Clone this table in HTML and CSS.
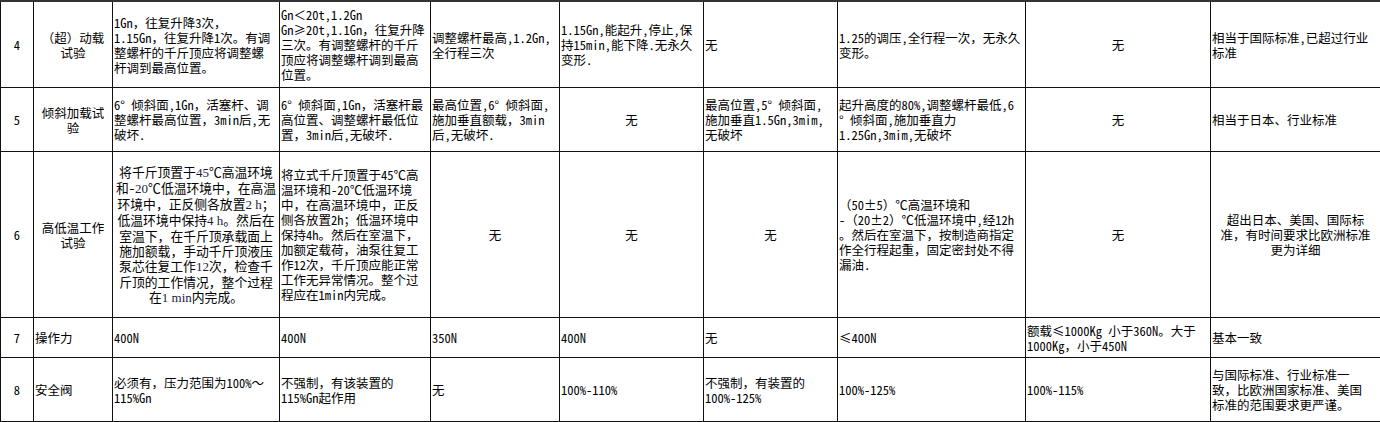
FILE: index.html
```html
<!DOCTYPE html>
<html lang="zh-CN">
<head>
<meta charset="utf-8">
<title>千斤顶标准对比</title>
<link rel="stylesheet" href="styles.css">
</head>
<body>
<table class="grid">
<colgroup>
<col class="w1"><col class="w2"><col class="w3"><col class="w4"><col class="w5">
<col class="w6"><col class="w7"><col class="w8"><col class="w9"><col class="w10">
</colgroup>
<tbody>
<tr class="r4">
<td class="c">4</td>
<td class="c">（超）动载<br>试验</td>
<td>1Gn，往复升降3次，<br>1.15Gn，往复升降1次。有调<br>整螺杆的千斤顶应将调整螺<br>杆调到最高位置。</td>
<td>Gn＜20t,1.2Gn<br>Gn≥20t,1.1Gn，往复升降<br>三次。有调整螺杆的千斤<br>顶应将调整螺杆调到最高<br>位置。</td>
<td>调整螺杆最高,1.2Gn,<br>全行程三次</td>
<td>1.15Gn,能起升,停止,保<br>持15min,能下降.无永久<br>变形.</td>
<td>无</td>
<td>1.25的调压,全行程一次，无永久<br>变形。</td>
<td class="c">无</td>
<td>相当于国际标准,已超过行业<br>标准</td>
</tr>
<tr class="r5">
<td class="c">5</td>
<td class="c">倾斜加载试<br>验</td>
<td>6° 倾斜面,1Gn，活塞杆、调<br>整螺杆最高位置，3min后,无<br>破坏.</td>
<td>6° 倾斜面,1Gn，活塞杆最<br>高位置、调整螺杆最低位<br>置，3min后,无破坏.</td>
<td>最高位置,6° 倾斜面,<br>施加垂直额载，3min<br>后,无破坏.</td>
<td class="c">无</td>
<td>最高位置,5° 倾斜面,<br>施加垂直1.5Gn,3mim,<br>无破坏</td>
<td>起升高度的80%,调整螺杆最低,6<br>° 倾斜面,施加垂直力<br>1.25Gn,3mim,无破坏</td>
<td class="c">无</td>
<td>相当于日本、行业标准</td>
</tr>
<tr class="r6">
<td class="c">6</td>
<td class="c">高低温工作<br>试验</td>
<td class="c big">将千斤顶置于<span class="s">45</span>℃高温环境<br>和-<span class="s">20</span>℃低温环境中，在高温<br>环境中，正反侧各放置<span class="s">2 h</span>；<br>低温环境中保持<span class="s">4 h</span>。然后在<br>室温下，在千斤顶承载面上<br>施加额载，手动千斤顶液压<br>泵芯往复工作<span class="s">12</span>次，检查千<br>斤顶的工作情况，整个过程<br>在<span class="s">1 min</span>内完成。</td>
<td>将立式千斤顶置于45℃高<br>温环境和-20℃低温环境<br>中，在高温环境中，正反<br>侧各放置2h；低温环境中<br>保持4h。然后在室温下，<br>加额定载荷，油泵往复工<br>作12次，千斤顶应能正常<br>工作无异常情况。整个过<br>程应在1min内完成。</td>
<td class="c">无</td>
<td class="c">无</td>
<td class="c">无</td>
<td>（50±5）℃高温环境和<br>-（20±2）℃低温环境中,经12h<br>。然后在室温下，按制造商指定<br>作全行程起重，固定密封处不得<br>漏油.</td>
<td class="c">无</td>
<td class="c">超出日本、美国、国际标<br>准，有时间要求比欧洲标准<br>更为详细</td>
</tr>
<tr class="r7">
<td class="c">7</td>
<td>操作力</td>
<td>400N</td>
<td>400N</td>
<td>350N</td>
<td>400N</td>
<td>无</td>
<td>≤400N</td>
<td>额载≤1000Kg 小于360N。大于<br>1000Kg，小于450N</td>
<td>基本一致</td>
</tr>
<tr class="r8">
<td class="c">8</td>
<td>安全阀</td>
<td>必须有，压力范围为100%～<br>115%Gn</td>
<td>不强制，有该装置的<br>115%Gn起作用</td>
<td>无</td>
<td>100%-110%</td>
<td>不强制，有装置的<br>100%-125%</td>
<td>100%-125%</td>
<td>100%-115%</td>
<td>与国际标准、行业标准一<br>致，比欧洲国家标准、美国<br>标准的范围要求更严谨。</td>
</tr>
</tbody>
</table>
</body>
</html>
```
FILE: styles.css
```css
html, body {
  margin: 0;
  padding: 0;
  background: #fff;
}
body {
  font-family: "Noto Sans Mono CJK SC", "Noto Sans CJK SC", sans-serif;
  font-size: 12.5px;
  line-height: 15px;
  color: #000;
}
.grid {
  border-collapse: collapse;
  table-layout: fixed;
  width: 1380px;
}
.w1 { width: 33px; }
.w2 { width: 79px; }
.w3 { width: 167px; }
.w4 { width: 151px; }
.w5 { width: 129px; }
.w6 { width: 144px; }
.w7 { width: 134px; }
.w8 { width: 188px; }
.w9 { width: 185px; }
.w10 { width: 170px; }
.grid td {
  border: 1px solid #111;
  padding: 0 0 0 1px;
  vertical-align: middle;
  text-align: left;
  white-space: nowrap;
  overflow: hidden;
}
.grid tr:first-child td {
  border-top: 2px solid #333;
}
.grid td.c {
  text-align: center;
  padding: 0;
}
.r4 td { height: 85px; }
.r5 td { height: 63px; }
.r6 td { height: 165px; }
.r7 td { height: 39px; }
.r8 td { height: 63px; }
.grid td.big {
  font-size: 12.8px;
  line-height: 15px;
}
.s {
  font-family: "Liberation Serif", serif;
  font-size: 13px;
  line-height: 15px;
  color: #1c1c3a;
}
```
